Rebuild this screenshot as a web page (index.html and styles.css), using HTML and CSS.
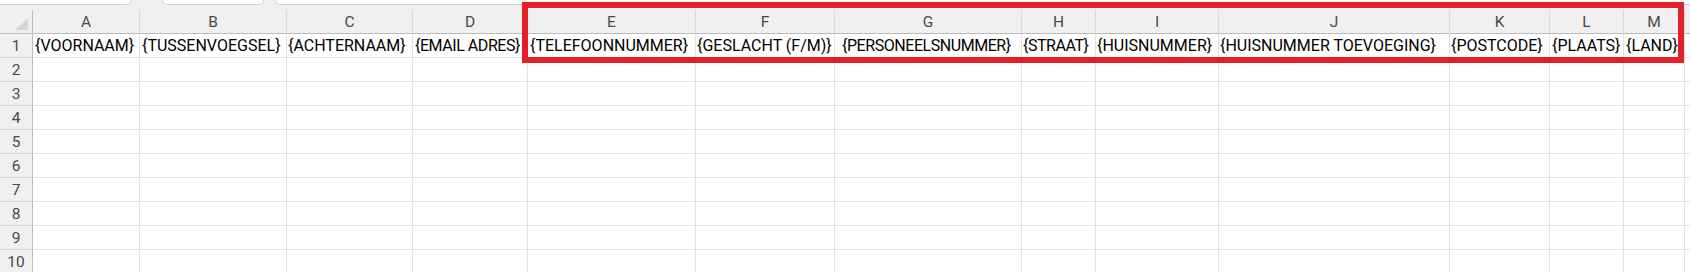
FILE: index.html
```html
<!DOCTYPE html>
<html lang="nl">
<head>
<meta charset="utf-8">
<title>Sheet</title>
<link rel="stylesheet" href="styles.css">
</head>
<body>
<div class="app">
  <div class="formula-strip">
    <div class="fbox namebox"></div>
    <div class="fbox fbuttons"></div>
    <div class="fbox finput"></div>
  </div>
  <div class="sheet">
    <div class="corner"><svg class="selall" width="13" height="12" viewBox="0 0 13 12"><polygon points="13,0 13,12 0,12" fill="#d6d6d6"/></svg></div>
    <div class="colhead">A</div>
    <div class="colhead">B</div>
    <div class="colhead">C</div>
    <div class="colhead">D</div>
    <div class="colhead">E</div>
    <div class="colhead">F</div>
    <div class="colhead">G</div>
    <div class="colhead">H</div>
    <div class="colhead">I</div>
    <div class="colhead">J</div>
    <div class="colhead">K</div>
    <div class="colhead">L</div>
    <div class="colhead">M</div>
    <div class="colhead last"></div>

    <div class="rowhead">1</div>
    <div class="cell">{VOORNAAM}</div>
    <div class="cell">{TUSSENVOEGSEL}</div>
    <div class="cell tight">{ACHTERNAAM}</div>
    <div class="cell condensed">{EMAIL ADRES}</div>
    <div class="cell">{TELEFOONNUMMER}</div>
    <div class="cell tight">{GESLACHT (F/M)}</div>
    <div class="cell wide condensed">{PERSONEELSNUMMER}</div>
    <div class="cell tight condensed">{STRAAT}</div>
    <div class="cell tight">{HUISNUMMER}</div>
    <div class="cell tight">{HUISNUMMER TOEVOEGING}</div>
    <div class="cell tight">{POSTCODE}</div>
    <div class="cell">{PLAATS}</div>
    <div class="cell">{LAND}</div>
    <div class="cell last"></div>

    <div class="rowhead">2</div>
    <div class="cell"></div><div class="cell"></div><div class="cell"></div><div class="cell"></div><div class="cell"></div><div class="cell"></div><div class="cell"></div><div class="cell"></div><div class="cell"></div><div class="cell"></div><div class="cell"></div><div class="cell"></div><div class="cell"></div><div class="cell last"></div>
    <div class="rowhead">3</div>
    <div class="cell"></div><div class="cell"></div><div class="cell"></div><div class="cell"></div><div class="cell"></div><div class="cell"></div><div class="cell"></div><div class="cell"></div><div class="cell"></div><div class="cell"></div><div class="cell"></div><div class="cell"></div><div class="cell"></div><div class="cell last"></div>
    <div class="rowhead">4</div>
    <div class="cell"></div><div class="cell"></div><div class="cell"></div><div class="cell"></div><div class="cell"></div><div class="cell"></div><div class="cell"></div><div class="cell"></div><div class="cell"></div><div class="cell"></div><div class="cell"></div><div class="cell"></div><div class="cell"></div><div class="cell last"></div>
    <div class="rowhead">5</div>
    <div class="cell"></div><div class="cell"></div><div class="cell"></div><div class="cell"></div><div class="cell"></div><div class="cell"></div><div class="cell"></div><div class="cell"></div><div class="cell"></div><div class="cell"></div><div class="cell"></div><div class="cell"></div><div class="cell"></div><div class="cell last"></div>
    <div class="rowhead">6</div>
    <div class="cell"></div><div class="cell"></div><div class="cell"></div><div class="cell"></div><div class="cell"></div><div class="cell"></div><div class="cell"></div><div class="cell"></div><div class="cell"></div><div class="cell"></div><div class="cell"></div><div class="cell"></div><div class="cell"></div><div class="cell last"></div>
    <div class="rowhead">7</div>
    <div class="cell"></div><div class="cell"></div><div class="cell"></div><div class="cell"></div><div class="cell"></div><div class="cell"></div><div class="cell"></div><div class="cell"></div><div class="cell"></div><div class="cell"></div><div class="cell"></div><div class="cell"></div><div class="cell"></div><div class="cell last"></div>
    <div class="rowhead">8</div>
    <div class="cell"></div><div class="cell"></div><div class="cell"></div><div class="cell"></div><div class="cell"></div><div class="cell"></div><div class="cell"></div><div class="cell"></div><div class="cell"></div><div class="cell"></div><div class="cell"></div><div class="cell"></div><div class="cell"></div><div class="cell last"></div>
    <div class="rowhead">9</div>
    <div class="cell"></div><div class="cell"></div><div class="cell"></div><div class="cell"></div><div class="cell"></div><div class="cell"></div><div class="cell"></div><div class="cell"></div><div class="cell"></div><div class="cell"></div><div class="cell"></div><div class="cell"></div><div class="cell"></div><div class="cell last"></div>
    <div class="rowhead">10</div>
    <div class="cell"></div><div class="cell"></div><div class="cell"></div><div class="cell"></div><div class="cell"></div><div class="cell"></div><div class="cell"></div><div class="cell"></div><div class="cell"></div><div class="cell"></div><div class="cell"></div><div class="cell"></div><div class="cell"></div><div class="cell last"></div>
  </div>
  <div class="highlight"></div>
</div>
</body>
</html>
```

FILE: styles.css
```css
html, body {
  margin: 0;
  padding: 0;
  background: #ffffff;
  overflow: hidden;
}

.app {
  position: relative;
  width: 1690px;
  height: 272px;
  overflow: hidden;
  font-family: Roboto, "Liberation Sans", Arial, sans-serif;
  font-size: 16px;
  color: #000000;
}

.formula-strip {
  display: flex;
  align-items: flex-start;
  height: 10px;
  background: #f0f0f0;
}

.fbox {
  height: 4px;
  background: #ffffff;
  border: 1px solid #d2d2d2;
  border-top: none;
  border-radius: 0 0 6px 6px;
}

.namebox {
  width: 131px;
  border-left: none;
  border-radius: 0 0 6px 0;
}

.fbuttons {
  width: 100px;
  margin-left: 30px;
}

.finput {
  flex: 1;
  margin-left: 11px;
  border-right: none;
  border-radius: 0 0 0 6px;
}

.sheet {
  display: grid;
  grid-template-columns: 33px 107px 147px 126px 115px 168px 139px 187px 74px 123px 231px 100px 74px 61px 1fr;
  grid-template-rows: 24px repeat(10, 24px);
}

.corner {
  background: #f0f0f0;
  border-right: 1px solid #bcbcbc;
  border-bottom: 1px solid #bcbcbc;
  display: flex;
  justify-content: flex-end;
  align-items: flex-end;
  padding: 0 4px 3px 0;
}

.colhead {
  background: #f0f0f0;
  border-right: 1px solid #d9d9d9;
  border-bottom: 1px solid #bcbcbc;
  color: #4a4a4a;
  font-size: 15.5px;
  text-align: center;
  line-height: 25px;
}

.colhead.last {
  border-right: none;
}

.rowhead {
  background: #f0f0f0;
  border-right: 1px solid #bcbcbc;
  border-bottom: 1px solid #d9d9d9;
  color: #4a4a4a;
  font-size: 15.5px;
  text-align: center;
  line-height: 24px;
}

.cell {
  border-right: 1px solid #e1e1e1;
  border-bottom: 1px solid #e1e1e1;
  padding-left: 2px;
  line-height: 24px;
  white-space: nowrap;
  overflow: visible;
}

.cell.tight {
  padding-left: 1px;
}

.cell.wide {
  padding-left: 7px;
}

.cell.condensed {
  letter-spacing: -0.45px;
}

.cell.last {
  border-right: none;
}

.highlight {
  position: absolute;
  left: 522px;
  top: 2px;
  width: 1162px;
  height: 61px;
  box-sizing: border-box;
  border: 6px solid #e3202a;
  pointer-events: none;
}
```
